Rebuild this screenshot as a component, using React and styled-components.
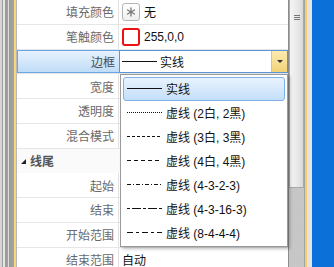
import React from 'react';
import styled, { createGlobalStyle } from 'styled-components';

const GlobalStyle = createGlobalStyle`
  html, body {
    margin: 0;
    padding: 0;
    overflow: hidden;
    background: #ffffff;
  }
  body {
    font-family: "Liberation Sans", "Noto Sans CJK SC", sans-serif;
    font-size: 12px;
  }
`;

const Window = styled.div`
  position: relative;
  display: flex;
  width: 334px;
  height: 267px;
  overflow: hidden;
`;

const LeftFrame = styled.div`
  width: 17px;
  flex: none;
  background: linear-gradient(
    to right,
    #d6d6d6 0px, #d6d6d6 2px,
    #9c9c9c 2px, #9c9c9c 3px,
    #e6e6e6 3px, #e6e6e6 5px,
    #989898 5px, #a2a2a2 8px,
    #dcdcdc 8px, #dcdcdc 9px,
    #9a9a9a 9px, #a4a4a4 14px,
    #f6d77a 14px, #f6d77a 16px,
    #b8b8b8 16px, #b8b8b8 17px
  );
`;

const Grid = styled.div`
  flex: none;
  width: 272px;
  display: flex;
  flex-direction: column;
  background: #ffffff;
  border-right: 1px solid #8c8c8c;
  box-sizing: border-box;
`;

const Row = styled.div`
  flex: none;
  height: 24.75px;
  box-sizing: border-box;
  display: grid;
  grid-template-columns: 102px 1fr;
  border-bottom: 1px solid #e6e6e6;
`;

const Label = styled.div`
  display: flex;
  align-items: center;
  justify-content: flex-end;
  padding-right: 4px;
  color: #6a6a6a;
  border-right: 1px solid #e2e2e2;
  white-space: nowrap;
  ${p => p.$active && `
    background: linear-gradient(to bottom, #e6f2fd, #c0dcf8);
    border: 1px solid #6aa6e6;
    border-right: none;
    color: #4a4a4a;
  `}
`;

const Value = styled.div`
  display: flex;
  align-items: center;
  gap: 4px;
  padding-left: 3px;
  color: #111;
  white-space: nowrap;
`;

const SectionRow = styled.div`
  flex: none;
  height: 24.75px;
  display: flex;
  align-items: center;
  gap: 4px;
  padding-left: 4px;
  font-weight: bold;
  color: #555;
  background: #fafafa;
`;

const Caret = styled.span`
  width: 0;
  height: 0;
  border-left: 5px solid transparent;
  border-bottom: 5px solid #222;
  margin-top: 2px;
`;

const FillIcon = styled.span`
  width: 16px;
  height: 16px;
  border: 1px solid #b4b4b4;
  border-radius: 3px;
  background: linear-gradient(to bottom, #ffffff, #f0f0f0);
  display: flex;
  align-items: center;
  justify-content: center;
`;

const Swatch = styled.span`
  width: 14px;
  height: 14px;
  border: 2px solid #ee1111;
  border-radius: 3px;
  background: #fff;
`;

const Combo = styled.div`
  display: flex;
  align-items: stretch;
  height: 100%;
  border: 1px solid #5a95d6;
  box-sizing: border-box;
  background: #fff;
`;

const ComboText = styled.div`
  flex: 1;
  display: flex;
  align-items: center;
  gap: 3px;
  padding-left: 2px;
  color: #111;
`;

const DropButton = styled.div`
  width: 15px;
  flex: none;
  display: flex;
  align-items: center;
  justify-content: center;
  background: linear-gradient(to bottom, #fcebb0, #f2d278);
  border-left: 1px solid #e2c46a;
`;

const DownArrow = styled.span`
  width: 0;
  height: 0;
  border-left: 3px solid transparent;
  border-right: 3px solid transparent;
  border-top: 3px solid #333;
`;

const Scrollbar = styled.div`
  width: 15px;
  flex: none;
  display: flex;
  flex-direction: column;
  background: repeating-linear-gradient(45deg, #c2c2c2 0px, #cbcbcb 1px, #c2c2c2 2px);
`;

const Thumb = styled.div`
  height: 188px;
  box-sizing: border-box;
  background: linear-gradient(to right, #f4f4f4, #e8e8e8 60%, #d8d8d8);
  border: 1px solid #a8a8a8;
  border-top: none;
  display: flex;
  justify-content: center;
  padding-top: 15px;
`;

const Grip = styled.span`
  width: 6px;
  height: 5px;
  background: repeating-linear-gradient(to bottom, #777 0px, #777 1px, transparent 1px, transparent 2px);
`;

const Edge = styled.div`
  width: 8px;
  flex: none;
  background: linear-gradient(
    to right,
    #a4a4a4 0px, #a4a4a4 1px,
    #f2cf6a 1px, #f2cf6a 3px,
    #e4e4e4 3px, #e4e4e4 8px
  );
`;

const Desktop = styled.div`
  flex: 1;
  background: #0b70d8;
`;

const Popup = styled.div`
  position: absolute;
  left: 120px;
  top: 74px;
  width: 168px;
  height: 173px;
  box-sizing: border-box;
  border: 1px solid #9a9a9a;
  background: #fff;
  padding: 2px;
  box-shadow: 2px 2px 3px rgba(0, 0, 0, 0.25);
  display: flex;
  flex-direction: column;
`;

const Item = styled.div`
  height: 24px;
  box-sizing: border-box;
  display: flex;
  align-items: center;
  gap: 4px;
  padding-left: 3px;
  border: 1px solid transparent;
  border-radius: 3px;
  color: #111;
  white-space: nowrap;
  ${p => p.$selected && `
    background: linear-gradient(to bottom, #e8f3fd, #c4def9);
    border-color: #7fb2e8;
  `}
`;

const dashes = {
  solid: null,
  d22: '1 1',
  d33: '3 2',
  d44: '4 3',
  d4323: '4 2 1 2',
  d43163: '3 2 9 2',
  d8444: '6 3 3 3',
};

function LineSample({ kind }) {
  return (
    <svg width="35" height="3" viewBox="0 0 35 3">
      <line x1="0" y1="1.5" x2="35" y2="1.5" stroke="#111" strokeWidth="1" strokeDasharray={dashes[kind] || undefined} />
    </svg>
  );
}

function Asterisk() {
  return (
    <svg width="10" height="10" viewBox="0 0 10 10">
      <g stroke="#777" strokeWidth="1.3" strokeLinecap="round">
        <line x1="5" y1="1" x2="5" y2="9" />
        <line x1="1.5" y1="3" x2="8.5" y2="7" />
        <line x1="1.5" y1="7" x2="8.5" y2="3" />
      </g>
    </svg>
  );
}

const items = [
  { kind: 'solid', text: '实线', selected: true },
  { kind: 'd22', text: '虚线 (2白, 2黑)' },
  { kind: 'd33', text: '虚线 (3白, 3黑)' },
  { kind: 'd44', text: '虚线 (4白, 4黑)' },
  { kind: 'd4323', text: '虚线 (4-3-2-3)' },
  { kind: 'd43163', text: '虚线 (4-3-16-3)' },
  { kind: 'd8444', text: '虚线 (8-4-4-4)' },
];

export default function App() {
  return (
    <>
      <GlobalStyle />
      <Window>
        <LeftFrame />
        <Grid>
          <Row>
            <Label>填充颜色</Label>
            <Value><FillIcon><Asterisk /></FillIcon>无</Value>
          </Row>
          <Row>
            <Label>笔触颜色</Label>
            <Value><Swatch />255,0,0</Value>
          </Row>
          <Row>
            <Label $active>边框</Label>
            <Combo>
              <ComboText><LineSample kind="solid" />实线</ComboText>
              <DropButton><DownArrow /></DropButton>
            </Combo>
          </Row>
          <Row>
            <Label>宽度</Label>
            <Value />
          </Row>
          <Row>
            <Label>透明度</Label>
            <Value />
          </Row>
          <Row>
            <Label>混合模式</Label>
            <Value />
          </Row>
          <SectionRow><Caret />线尾</SectionRow>
          <Row>
            <Label>起始</Label>
            <Value />
          </Row>
          <Row>
            <Label>结束</Label>
            <Value />
          </Row>
          <Row>
            <Label>开始范围</Label>
            <Value />
          </Row>
          <Row>
            <Label>结束范围</Label>
            <Value>自动</Value>
          </Row>
        </Grid>
        <Scrollbar>
          <Thumb><Grip /></Thumb>
        </Scrollbar>
        <Edge />
        <Desktop />
        <Popup>
          {items.map(it => (
            <Item key={it.text} $selected={it.selected}>
              <LineSample kind={it.kind} />
              {it.text}
            </Item>
          ))}
        </Popup>
      </Window>
    </>
  );
}
